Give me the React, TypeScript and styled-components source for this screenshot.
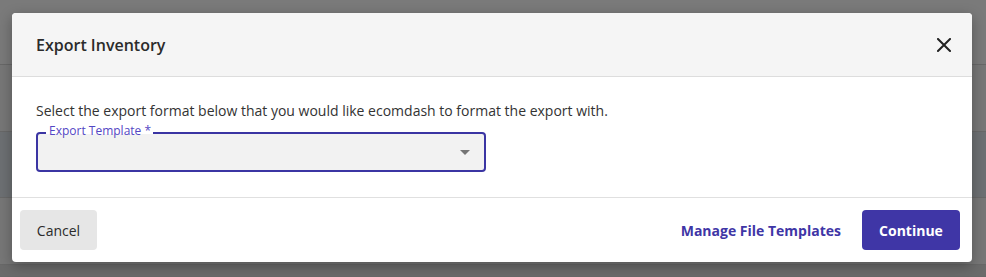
import styled, { createGlobalStyle } from 'styled-components'

const GlobalStyle = createGlobalStyle`
  html, body {
    margin: 0;
    padding: 0;
  }
  body {
    font-family: "Open Sans", "Noto Sans", sans-serif;
    background: #777777;
  }
`

export default function App() {
  return (
    <>
      <GlobalStyle />
      <Backdrop>
        <BackRow $h={65} $tone="#7a7a7a" />
        <BackRow $h={67} $tone="#777777" />
        <BackRow $h={66} $tone="#6d7073" />
        <BackRow $h={67} $tone="#777777" />
        <BackRow $h={12} $tone="#6b6b6b" />
      </Backdrop>
      <Overlay>
        <Dialog>
          <Header>
            <Title>Export Inventory</Title>
            <CloseButton type="button" aria-label="Close">
              <svg width="14" height="14" viewBox="0 0 14 14">
                <path d="M1 1 L13 13 M13 1 L1 13" stroke="#222" strokeWidth="2" strokeLinecap="square" />
              </svg>
            </CloseButton>
          </Header>
          <Body>
            <Intro>Select the export format below that you would like ecomdash to format the export with.</Intro>
            <Field>
              <FieldLabel>Export Template *</FieldLabel>
              <Select>
                <Caret />
              </Select>
            </Field>
          </Body>
          <Footer>
            <SecondaryButton type="button">Cancel</SecondaryButton>
            <Actions>
              <LinkButton type="button">Manage File Templates</LinkButton>
              <PrimaryButton type="button">Continue</PrimaryButton>
            </Actions>
          </Footer>
        </Dialog>
      </Overlay>
    </>
  )
}

const Backdrop = styled.div`
  display: flex;
  flex-direction: column;
  height: 277px;
  overflow: hidden;
`

const BackRow = styled.div<{ $h: number; $tone: string }>`
  height: ${p => p.$h}px;
  flex-shrink: 0;
  background: ${p => p.$tone};
  border-bottom: 1px solid #686868;
  box-sizing: border-box;
`

const Overlay = styled.div`
  position: absolute;
  inset: 0;
  padding: 13px 14px 0 12px;
`

const Dialog = styled.div`
  width: 960px;
  background: #ffffff;
  border-radius: 4px;
  box-shadow: 0 4px 14px rgba(0, 0, 0, 0.3);
  overflow: hidden;
  display: flex;
  flex-direction: column;
`

const Header = styled.div`
  height: 64px;
  flex-shrink: 0;
  box-sizing: border-box;
  background: #f5f5f5;
  border-bottom: 1px solid #dddddd;
  display: flex;
  align-items: center;
  justify-content: space-between;
  padding: 0 24px 0 24px;
`

const Title = styled.h2`
  margin: 0;
  font-size: 16px;
  font-weight: 600;
  color: #2b2b2b;
`

const CloseButton = styled.button`
  appearance: none;
  background: none;
  border: 0;
  padding: 0;
  margin-right: -3px;
  display: flex;
  cursor: pointer;
`

const Body = styled.div`
  padding: 24px 24px 25px 24px;
  border-bottom: 1px solid #e0e0e0;
`

const Intro = styled.p`
  margin: 0 0 11px 0;
  font-size: 14px;
  line-height: 20px;
  color: #333333;
`

const Field = styled.div`
  position: relative;
  width: 450px;
`

const FieldLabel = styled.span`
  position: absolute;
  top: -8px;
  left: 10px;
  padding: 0 2px 0 3px;
  font-size: 12px;
  line-height: 14px;
  color: #5346c4;
  background: linear-gradient(#ffffff 72%, #f2f2f2 72%);
`

const Select = styled.div`
  height: 40px;
  box-sizing: border-box;
  background: #f2f2f2;
  border: 2px solid #3b35a3;
  border-radius: 4px;
  display: flex;
  align-items: center;
  justify-content: flex-end;
  padding-right: 14px;
`

const Caret = styled.span`
  width: 0;
  height: 0;
  border-left: 5px solid transparent;
  border-right: 5px solid transparent;
  border-top: 5px solid #757575;
`

const Footer = styled.div`
  display: flex;
  align-items: center;
  justify-content: space-between;
  padding: 12px 12px 12px 8px;
`

const Actions = styled.div`
  display: flex;
  align-items: center;
  gap: 21px;
`

const BaseButton = styled.button`
  appearance: none;
  border: 0;
  font-family: inherit;
  font-size: 14px;
  cursor: pointer;
  height: 40px;
  border-radius: 4px;
`

const SecondaryButton = styled(BaseButton)`
  width: 77px;
  background: #e6e6e6;
  color: #2b2b2b;
  font-weight: 500;
`

const LinkButton = styled(BaseButton)`
  background: none;
  padding: 0;
  color: #3f36a6;
  font-weight: 700;
`

const PrimaryButton = styled(BaseButton)`
  width: 98px;
  background: #3f36a6;
  color: #ffffff;
  font-weight: 700;
`
